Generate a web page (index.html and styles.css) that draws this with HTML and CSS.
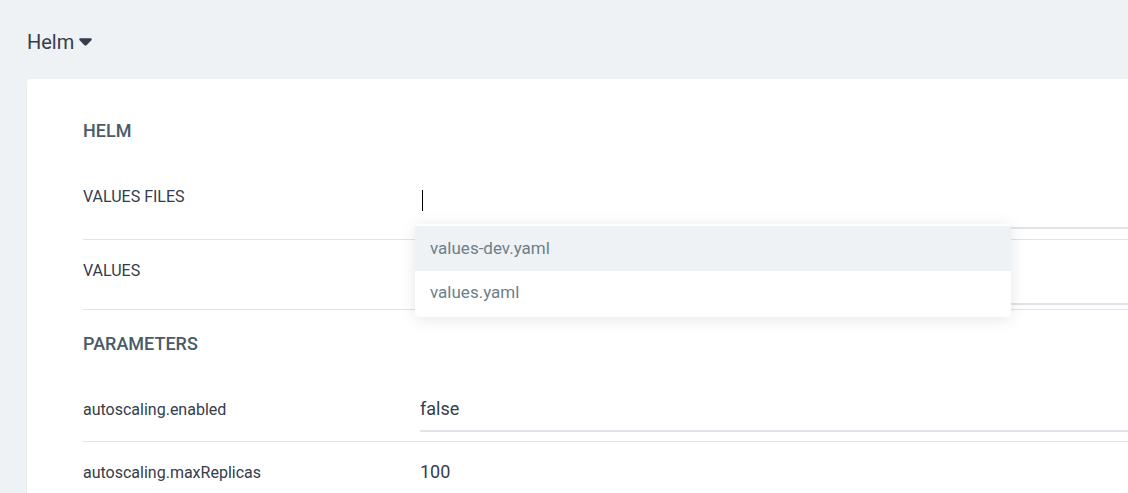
FILE: index.html
```html
<!DOCTYPE html>
<html lang="en">
<head>
<meta charset="utf-8">
<meta name="viewport" content="width=device-width, initial-scale=1">
<title>Helm</title>
<link rel="stylesheet" href="styles.css">
</head>
<body>
<main class="page">
  <button class="source-type" type="button">Helm
    <svg class="caret-down" viewBox="0 0 14 8" aria-hidden="true"><path d="M1.6 0h10.8c1.2 0 1.700 1.300.9 2.100L8.400 7.200c-.8.8-2 .8-2.800 0L.7 2.100C-.1 1.300.4 0 1.600 0z"/></svg>
  </button>
  <form class="card">
    <h2 class="title">HELM</h2>
    <div class="row row-files">
      <label class="label" for="files">VALUES FILES</label>
      <div class="field">
        <input class="input" id="files" type="text" autocomplete="off">
        <span class="text-cursor"></span>
        <div class="menu" role="listbox" aria-label="Values files">
          <button class="option option-active" type="button" role="option" aria-selected="true">values-dev.yaml</button>
          <button class="option" type="button" role="option" aria-selected="false">values.yaml</button>
        </div>
      </div>
    </div>
    <div class="row row-values">
      <label class="label" for="values">VALUES</label>
      <div class="field"><input class="input" id="values" type="text"></div>
    </div>
    <h2 class="title">PARAMETERS</h2>
    <div class="row">
      <label class="label" for="enabled">autoscaling.enabled</label>
      <div class="field"><input class="input" id="enabled" type="text" value="false"></div>
    </div>
    <div class="row">
      <label class="label" for="max">autoscaling.maxReplicas</label>
      <div class="field"><input class="input" id="max" type="text" value="100"></div>
    </div>
  </form>
</main>
</body>
</html>
```

FILE: styles.css
```css
* {
  box-sizing: border-box;
}

html {
  scrollbar-width: none;
}

body {
  margin: 0;
  background: #eef2f5;
  color: #363c4a;
  font-family: Roboto, "Liberation Sans", sans-serif;
  font-size: 16px;
}

button,
input {
  font-family: inherit;
  border: 0;
  background: none;
}

.page {
  display: flex;
  flex-direction: column;
  min-height: 100vh;
  padding: 30px 0 0 27px;
  overflow-x: hidden;
}

.source-type {
  display: flex;
  align-items: center;
  align-self: flex-start;
  gap: 5px;
  margin-bottom: 25px;
  padding: 0;
  color: #363c4a;
  font-size: 20px;
  line-height: 24px;
}

.caret-down {
  width: 13px;
  height: 8px;
  fill: #363c4a;
}

.card {
  flex: 1;
  padding: 40px 0 0 56px;
  border-radius: 4px 0 0 0;
  background: #fff;
  box-shadow: 0 1px 2px rgba(0, 0, 0, 0.08);
}

.title {
  margin: 0 0 23px;
  color: #495b68;
  font-size: 18px;
  font-weight: 500;
  line-height: 24px;
}

.row {
  display: flex;
  padding-bottom: 9px;
  border-bottom: 1px solid #dee4e9;
}

.row + .title {
  margin-top: 22px;
}

.row-files {
  padding-bottom: 10px;
}

.row-values {
  padding-bottom: 4px;
}

.label {
  flex: 0 0 337px;
  padding-top: 21px;
  line-height: 20px;
}

.field {
  position: relative;
  flex: 1;
}

.input {
  display: block;
  width: 100%;
  height: 53px;
  padding: 8px 0 0;
  border-bottom: 2px solid #dee4e9;
  border-radius: 0;
  outline: none;
  color: #363c4a;
  font-size: 18px;
}

.row-files .input {
  height: 63px;
}

.row-values .input {
  height: 65px;
}

.text-cursor {
  position: absolute;
  top: 24px;
  left: 2px;
  width: 1px;
  height: 21px;
  background: #000;
}

.menu {
  position: absolute;
  z-index: 1;
  top: 58px;
  left: -5px;
  width: 596px;
  padding: 2px 0;
  border-radius: 4px;
  background: #fff;
  box-shadow: 0 2px 16px rgba(0, 0, 0, 0.1);
}

.option {
  display: block;
  width: 100%;
  height: 44px;
  padding: 0 15px 2px;
  color: #6d7f8b;
  font-size: 17px;
  text-align: left;
}

.option-active {
  height: 45px;
  background: #eef2f5;
}
```
